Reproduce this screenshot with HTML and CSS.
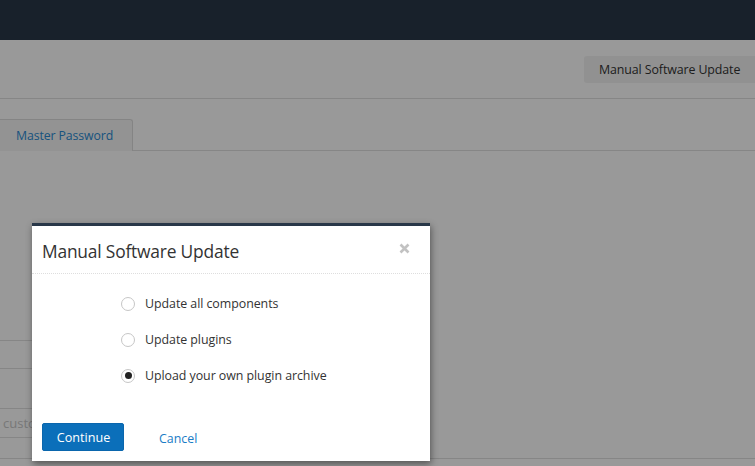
FILE: index.html
```html
<!DOCTYPE html>
<html>
<head>
<meta charset="utf-8">
<link rel="stylesheet" href="styles.css">
</head>
<body>
<div class="page">
  <header class="topbar"></header>
  <div class="toolbar">
    <button class="btn-plain">Manual Software Update</button>
  </div>
  <div class="tabs">
    <div class="tab">Master Password</div>
  </div>
  <div class="content">
    <div class="form">
      <div class="row r1"></div>
      <div class="row r2"></div>
      <div class="row r3"><span class="ph">customer</span></div>
    </div>
    <div class="row r4"></div>
  </div>
</div>
<div class="overlay"></div>
<div class="modal">
  <div class="modal-header">
    <h4 class="modal-title">Manual Software Update</h4>
    <svg class="close" width="11" height="11" viewBox="0 0 11 11"><path d="M1.5 1.5 L9.5 9.5 M9.5 1.5 L1.5 9.5" stroke="#c2c2c2" stroke-width="2.6" stroke-linecap="butt"/></svg>
  </div>
  <div class="modal-body">
    <label class="radio"><span class="dot"></span><span>Update all components</span></label>
    <label class="radio"><span class="dot"></span><span>Update plugins</span></label>
    <label class="radio"><span class="dot checked"></span><span>Upload your own plugin archive</span></label>
  </div>
  <div class="modal-footer">
    <button class="btn-primary">Continue</button>
    <a class="link">Cancel</a>
  </div>
</div>
</body>
</html>
```
FILE: styles.css
```css
* { box-sizing: border-box; }
html, body { margin: 0; padding: 0; }
body {
  width: 755px; height: 466px; overflow: hidden;
  font-family: "Open Sans", "Noto Sans", sans-serif;
  background: #fff;
  position: relative;
}
.page { display: flex; flex-direction: column; }
.topbar { height: 40px; background: #283748; }
.toolbar {
  height: 59px;
  border-bottom: 1px solid #e0e0e0;
  display: flex; justify-content: flex-end; align-items: flex-start;
  padding-top: 16px;
}
.btn-plain {
  height: 27px; width: 172px; margin-right: -1px;
  border: 0; border-radius: 3px 0 0 3px;
  background: #f2f2f2; color: #333;
  font-family: inherit; font-size: 12.4px; letter-spacing: -0.1px;
  padding: 0 0 0 15px; text-align: left;
}
.tabs {
  height: 52px;
  border-bottom: 1px solid #e0e0e0;
  display: flex; align-items: flex-end;
}
.tab {
  height: 32px; width: 134px; margin-left: -1px; margin-bottom: -1px;
  border: 1px solid #dcdcdc; border-bottom: 0; border-radius: 0 3px 0 0;
  background: #f6f6f6; color: #2a8ad2;
  font-size: 12.3px; letter-spacing: -0.1px;
  padding: 7px 0 0 16px;
}
.content { display: flex; flex-direction: column; padding-top: 189px; }
.form { width: 400px; display: flex; flex-direction: column; }
.row { border-bottom: 1px solid #e0e0e0; }
.r1 { height: 29px; border-top: 1px solid #e0e0e0; }
.r2 { height: 40px; }
.r3 { height: 29px; display: flex; align-items: center; padding-left: 3px; }
.ph { color: #c8c8c8; font-size: 13px; }
.r4 { height: 21px; }
.overlay {
  position: absolute; inset: 0;
  background: rgba(0,0,0,0.4);
}
.modal {
  position: absolute; left: 32px; top: 223px; width: 398px; height: 238px;
  background: #fff;
  border-top: 3px solid #283748;
  box-shadow: 1px 3px 7px rgba(0,0,0,0.45);
  display: flex; flex-direction: column;
}
.modal-header {
  height: 48px;
  border-bottom: 1px dotted #dedede;
  display: flex; align-items: center; justify-content: space-between;
  padding: 2px 20px 0 10px;
}
.modal-title {
  margin: 0; font-weight: 400; font-size: 17.4px; color: #333; letter-spacing: -0.2px;
}
.close { display: block; margin-top: -4px; }
.modal-body {
  height: 139px;
  display: flex; flex-direction: column;
  padding: 22px 0 0 89px; gap: 21px;
}
.radio {
  display: flex; align-items: center; gap: 10px;
  height: 15px; font-size: 12.4px; color: #333; letter-spacing: -0.05px;
}
.dot {
  width: 14px; height: 14px; border-radius: 50%;
  border: 1px solid #c6c6c6; background: #fff;
  display: flex; align-items: center; justify-content: center;
}
.dot.checked::after {
  content: ""; width: 7px; height: 7px; border-radius: 50%; background: #222;
}
.modal-footer {
  flex: 1;
  display: flex; align-items: flex-start; gap: 35px;
  padding: 10px 0 0 10px;
}
.btn-primary {
  width: 82px; height: 28px;
  background: #0b6fba; color: #fff; border: 1px solid #0a66ad; border-radius: 2px;
  font-family: inherit; font-size: 12.6px; padding: 0 0 0 1px;
}
.link { color: #1a7cc6; font-size: 12.4px; margin-top: 7px; }
```
